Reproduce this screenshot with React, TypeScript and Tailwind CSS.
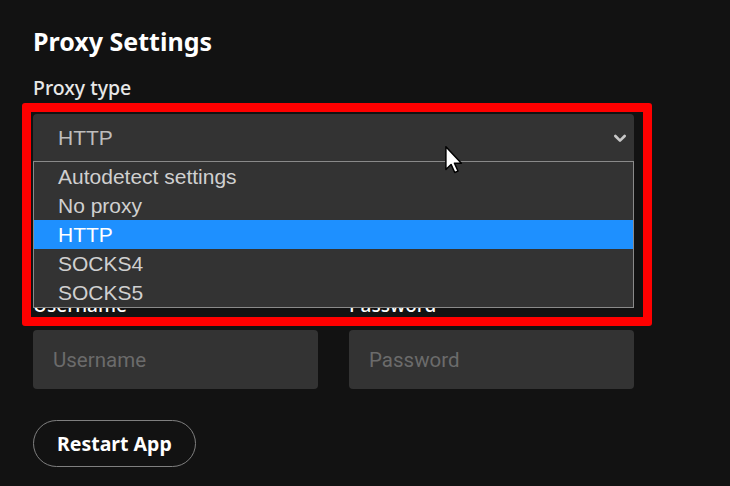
import { useState } from 'react';

const OPTIONS = ['Autodetect settings', 'No proxy', 'HTTP', 'SOCKS4', 'SOCKS5'];

function Field({ label, placeholder }: { label: string; placeholder: string }) {
  return (
    <div>
      <label className="block text-[19px] leading-[24px] font-medium text-white font-['Noto_Sans',sans-serif]">{label}</label>
      <input
        placeholder={placeholder}
        className="mt-[13px] block w-full h-[59px] rounded-[4px] bg-[#333333] px-[20px] text-[20.5px] text-white placeholder:text-[#6b6b6b] outline-none font-['Roboto',sans-serif]"
      />
    </div>
  );
}

export default function App() {
  const [selected] = useState('HTTP');

  return (
    <div className="relative w-[730px] h-[486px] overflow-hidden bg-[#121212]">
      <div className="w-[634px] pl-[33px] pt-[26px]">
        <h2 className="text-[25px] leading-[30px] font-bold text-white font-['Noto_Sans',sans-serif]">Proxy Settings</h2>
        <label className="block mt-[20px] text-[19.5px] leading-[24px] font-medium text-[#e8e8e8] font-['Noto_Sans',sans-serif]">Proxy type</label>

        <div className="relative mt-[14px]">
          <div className="flex h-[47px] items-center justify-between rounded-t-[4px] bg-[#333333] pl-[25px] pr-[6px]">
            <span className="text-[21px] text-[#bdbdbd] font-['Liberation_Sans',Arial,sans-serif]">{selected}</span>
            <svg width="16" height="16" viewBox="0 0 24 24" fill="none" stroke="#c8c8c8" strokeWidth="4" strokeLinecap="round" strokeLinejoin="round">
              <path d="M5 9l7 7 7-7" />
            </svg>
          </div>

          <ul className="absolute left-0 top-full z-10 w-full border border-[#8a8a8a] bg-[#333333] font-['Liberation_Sans',Arial,sans-serif]">
            {OPTIONS.map(o => (
              <li
                key={o}
                className={`h-[29px] pl-[24px] text-[21px] leading-[30px] ${o === selected ? 'bg-[#1e90ff] text-white' : 'text-[#d0d0d0]'}`}
              >
                {o}
              </li>
            ))}
          </ul>
        </div>

        <div className="mt-[18px] grid grid-cols-2 gap-x-[31px] gap-y-[18px]">
          <Field label="Host" placeholder="Host" />
          <Field label="Port" placeholder="Port" />
          <Field label="Username" placeholder="Username" />
          <Field label="Password" placeholder="Password" />
        </div>

        <button className="mt-[31px] h-[47px] rounded-full border border-[#7f7f7f] px-[23px] text-[19.5px] font-bold text-white font-['Noto_Sans',sans-serif]">
          Restart App
        </button>
      </div>

      {/* annotation frame */}
      <div className="pointer-events-none absolute left-[22px] top-[103px] z-20 h-[223px] w-[630px] rounded-[3px] border-[9px] border-[#ff0000]" />

      {/* mouse pointer */}
      <svg className="pointer-events-none absolute left-[445px] top-[146px] z-30" width="18" height="28" viewBox="0 0 12 19">
        <path d="M0.5 0.5 L0.5 16 L4 12.5 L6.5 18 L8.7 17 L6.3 11.7 L11 11.7 Z" fill="#ffffff" stroke="#000000" strokeWidth="1" strokeLinejoin="round" />
      </svg>
    </div>
  );
}
